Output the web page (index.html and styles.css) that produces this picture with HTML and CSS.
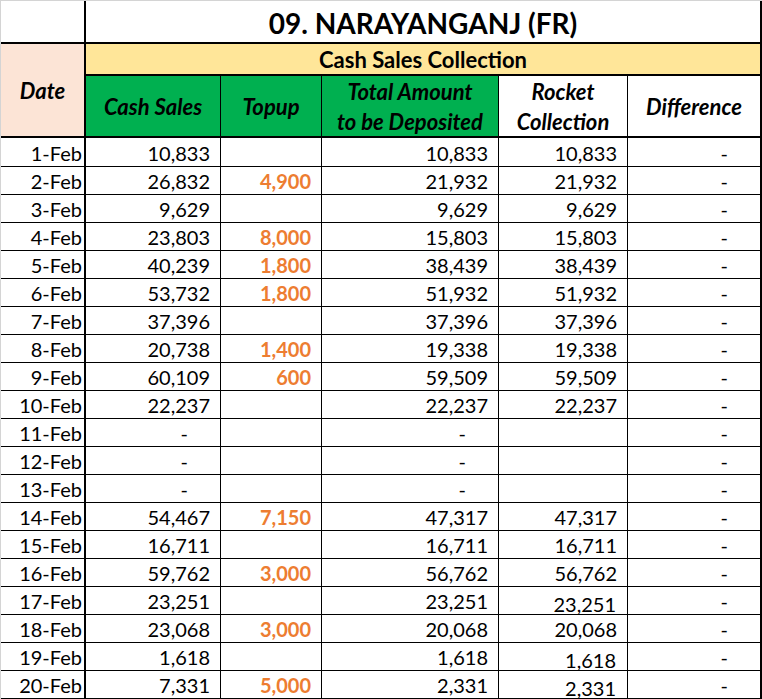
FILE: index.html
```html
<!DOCTYPE html>
<html>
<head>
<meta charset="utf-8">
<link rel="stylesheet" href="styles.css">
</head>
<body>
<div class="sheet">
  <div class="c blank"></div>
  <div class="c title">09. NARAYANGANJ (FR)</div>

  <div class="c datehead">Date</div>
  <div class="c group">Cash Sales Collection</div>

  <div class="c h green">Cash Sales</div>
  <div class="c h green">Topup</div>
  <div class="c h green">Total Amount<br>to be Deposited</div>
  <div class="c h">Rocket<br>Collection</div>
  <div class="c h last">Difference</div>

  <div class="c d first">1-Feb</div><div class="c n first">10,833</div><div class="c n t first"></div><div class="c n first">10,833</div><div class="c n first">10,833</div><div class="c n dash last first">-</div>
  <div class="c d">2-Feb</div><div class="c n">26,832</div><div class="c n t">4,900</div><div class="c n">21,932</div><div class="c n">21,932</div><div class="c n dash last">-</div>
  <div class="c d">3-Feb</div><div class="c n">9,629</div><div class="c n t"></div><div class="c n">9,629</div><div class="c n">9,629</div><div class="c n dash last">-</div>
  <div class="c d">4-Feb</div><div class="c n">23,803</div><div class="c n t">8,000</div><div class="c n">15,803</div><div class="c n">15,803</div><div class="c n dash last">-</div>
  <div class="c d">5-Feb</div><div class="c n">40,239</div><div class="c n t">1,800</div><div class="c n">38,439</div><div class="c n">38,439</div><div class="c n dash last">-</div>
  <div class="c d">6-Feb</div><div class="c n">53,732</div><div class="c n t">1,800</div><div class="c n">51,932</div><div class="c n">51,932</div><div class="c n dash last">-</div>
  <div class="c d">7-Feb</div><div class="c n">37,396</div><div class="c n t"></div><div class="c n">37,396</div><div class="c n">37,396</div><div class="c n dash last">-</div>
  <div class="c d">8-Feb</div><div class="c n">20,738</div><div class="c n t">1,400</div><div class="c n">19,338</div><div class="c n">19,338</div><div class="c n dash last">-</div>
  <div class="c d">9-Feb</div><div class="c n">60,109</div><div class="c n t">600</div><div class="c n">59,509</div><div class="c n">59,509</div><div class="c n dash last">-</div>
  <div class="c d">10-Feb</div><div class="c n">22,237</div><div class="c n t"></div><div class="c n">22,237</div><div class="c n">22,237</div><div class="c n dash last">-</div>
  <div class="c d">11-Feb</div><div class="c n dash">-</div><div class="c n t"></div><div class="c n dash">-</div><div class="c n"></div><div class="c n dash last">-</div>
  <div class="c d">12-Feb</div><div class="c n dash">-</div><div class="c n t"></div><div class="c n dash">-</div><div class="c n"></div><div class="c n dash last">-</div>
  <div class="c d">13-Feb</div><div class="c n dash">-</div><div class="c n t"></div><div class="c n dash">-</div><div class="c n"></div><div class="c n dash last">-</div>
  <div class="c d">14-Feb</div><div class="c n">54,467</div><div class="c n t">7,150</div><div class="c n">47,317</div><div class="c n">47,317</div><div class="c n dash last">-</div>
  <div class="c d">15-Feb</div><div class="c n">16,711</div><div class="c n t"></div><div class="c n">16,711</div><div class="c n">16,711</div><div class="c n dash last">-</div>
  <div class="c d">16-Feb</div><div class="c n">59,762</div><div class="c n t">3,000</div><div class="c n">56,762</div><div class="c n">56,762</div><div class="c n dash last">-</div>
  <div class="c d">17-Feb</div><div class="c n">23,251</div><div class="c n t"></div><div class="c n">23,251</div><div class="c n lo">23,251</div><div class="c n dash last">-</div>
  <div class="c d">18-Feb</div><div class="c n">23,068</div><div class="c n t">3,000</div><div class="c n">20,068</div><div class="c n">20,068</div><div class="c n dash last">-</div>
  <div class="c d">19-Feb</div><div class="c n">1,618</div><div class="c n t"></div><div class="c n">1,618</div><div class="c n lo">1,618</div><div class="c n dash last">-</div>
  <div class="c d">20-Feb</div><div class="c n">7,331</div><div class="c n t">5,000</div><div class="c n">2,331</div><div class="c n lo">2,331</div><div class="c n dash last">-</div>
</div>
</body>
</html>
```

FILE: styles.css
```css
html, body {
  margin: 0;
  padding: 0;
  background: #ffffff;
}

body {
  font-family: Lato, "Open Sans", "Liberation Sans", sans-serif;
  color: #000000;
}

.sheet {
  width: 762px;
  height: 699px;
  box-sizing: border-box;
  border-top: 1px solid #d4d4d4;
  border-left: 1px solid #d4d4d4;
  display: grid;
  grid-template-columns: 85px 135px 101px 177px 129px 134px;
  grid-template-rows: 43px 32px 62px 29px;
  grid-auto-rows: 28px;
  overflow: hidden;
}

.c {
  box-sizing: border-box;
  border-right: 1px solid #000;
  border-bottom: 1px solid #000;
  display: flex;
  align-items: center;
  white-space: nowrap;
  font-size: 20px;
  line-height: 24px;
}

.blank {
  border-right-width: 2px;
  border-bottom-width: 2px;
}

.title {
  grid-column: 2 / 7;
  border-right-width: 2px;
  border-bottom-width: 2px;
  justify-content: center;
  font-weight: 700;
  font-size: 28px;
  line-height: 34px;
  padding-top: 2px;
}

.datehead {
  grid-row: 2 / 4;
  background: #fce4d6;
  border-right-width: 2px;
  border-bottom-width: 2px;
  justify-content: center;
  font-weight: 700;
  font-style: italic;
  font-size: 22px;
  padding-top: 1px;
}

.group {
  grid-column: 2 / 7;
  background: #ffe699;
  border-right-width: 2px;
  border-bottom-width: 2px;
  justify-content: center;
  font-weight: 700;
  font-size: 22px;
  padding-top: 2px;
}

.h {
  justify-content: center;
  text-align: center;
  font-weight: 700;
  font-style: italic;
  font-size: 22px;
  line-height: 30px;
  border-bottom-width: 2px;
  padding-top: 1px;
}

.green {
  background: #00b050;
}

.last {
  border-right-width: 2px;
}

.d {
  justify-content: flex-end;
  padding-right: 2px;
  padding-top: 1px;
  border-right-width: 2px;
}

.n {
  justify-content: flex-end;
  padding-right: 10px;
  padding-top: 1px;
}

.t {
  color: #ed7d31;
  font-weight: 700;
}

.dash {
  padding-right: 32px;
}

.lo {
  align-items: flex-end;
  line-height: 20px;
  padding-right: 11px;
  padding-top: 0;
}
```
